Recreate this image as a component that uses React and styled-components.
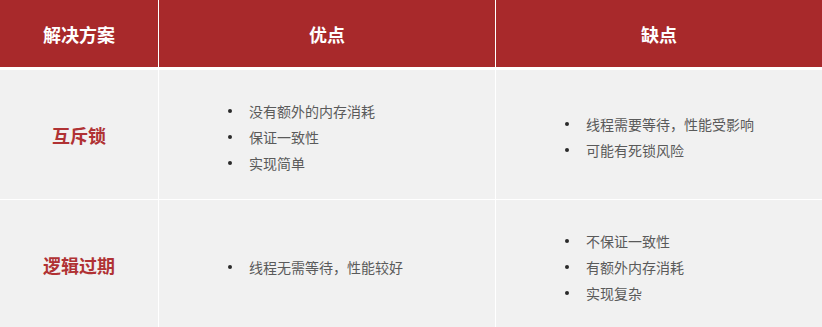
import styled, { createGlobalStyle } from 'styled-components';

const GlobalStyle = createGlobalStyle`
    html, body {
        margin: 0;
        padding: 0;
        background: #FFF;
    }
    body {
        font-family: "Noto Sans CJK SC", "Noto Sans", sans-serif;
    }
`;

const StyledTable = styled.div`
    width: 822px;
    height: 327px;
    overflow: hidden;
    background-color: #FFF;
`;

const StyledRow = styled.div`
    display: grid;
    grid-template-columns: 158px 336px 1fr;
    column-gap: 1px;
    height: ${(props) => props.height}px;
    margin-bottom: ${(props) => props.gap}px;
`;

const StyledHeadCell = styled.div`
    background-color: #A8292B;
    color: #FFF;
    font-size: 18px;
    font-weight: 700;
    display: flex;
    align-items: center;
    justify-content: center;
`;

const StyledTitleCell = styled.div`
    background-color: #F1F1F1;
    color: #B03234;
    font-size: 18px;
    font-weight: 700;
    display: flex;
    align-items: center;
    justify-content: center;
`;

const StyledListCell = styled.div`
    background-color: #F1F1F1;
    display: flex;
    align-items: center;
    padding-left: 69px;
    padding-top: 4px;
`;

const StyledList = styled.ul`
    margin: 0;
    padding: 0;
    list-style: none;
`;

const StyledItem = styled.li`
    display: flex;
    align-items: center;
    font-size: 14px;
    line-height: 26px;
    color: #5A5A5A;
`;

const StyledDot = styled.span`
    width: 4px;
    height: 4px;
    border-radius: 50%;
    background-color: #2A2A2A;
    margin-right: 17px;
    flex-shrink: 0;
`;

const rows = [
    {
        name: '互斥锁',
        pros: ['没有额外的内存消耗', '保证一致性', '实现简单'],
        cons: ['线程需要等待，性能受影响', '可能有死锁风险'],
    },
    {
        name: '逻辑过期',
        pros: ['线程无需等待，性能较好'],
        cons: ['不保证一致性', '有额外内存消耗', '实现复杂'],
    },
];

const App = () => {
    return (
        <StyledTable>
            <GlobalStyle />
            <StyledRow height={67} gap={3}>
                <StyledHeadCell>解决方案</StyledHeadCell>
                <StyledHeadCell>优点</StyledHeadCell>
                <StyledHeadCell>缺点</StyledHeadCell>
            </StyledRow>
            {rows.map((row) => (
                <StyledRow key={row.name} height={129} gap={1}>
                    <StyledTitleCell>{row.name}</StyledTitleCell>
                    <StyledListCell>
                        <StyledList>
                            {row.pros.map((p) => <StyledItem key={p}><StyledDot />{p}</StyledItem>)}
                        </StyledList>
                    </StyledListCell>
                    <StyledListCell>
                        <StyledList>
                            {row.cons.map((c) => <StyledItem key={c}><StyledDot />{c}</StyledItem>)}
                        </StyledList>
                    </StyledListCell>
                </StyledRow>
            ))}
        </StyledTable>
    );
};

export default App;
